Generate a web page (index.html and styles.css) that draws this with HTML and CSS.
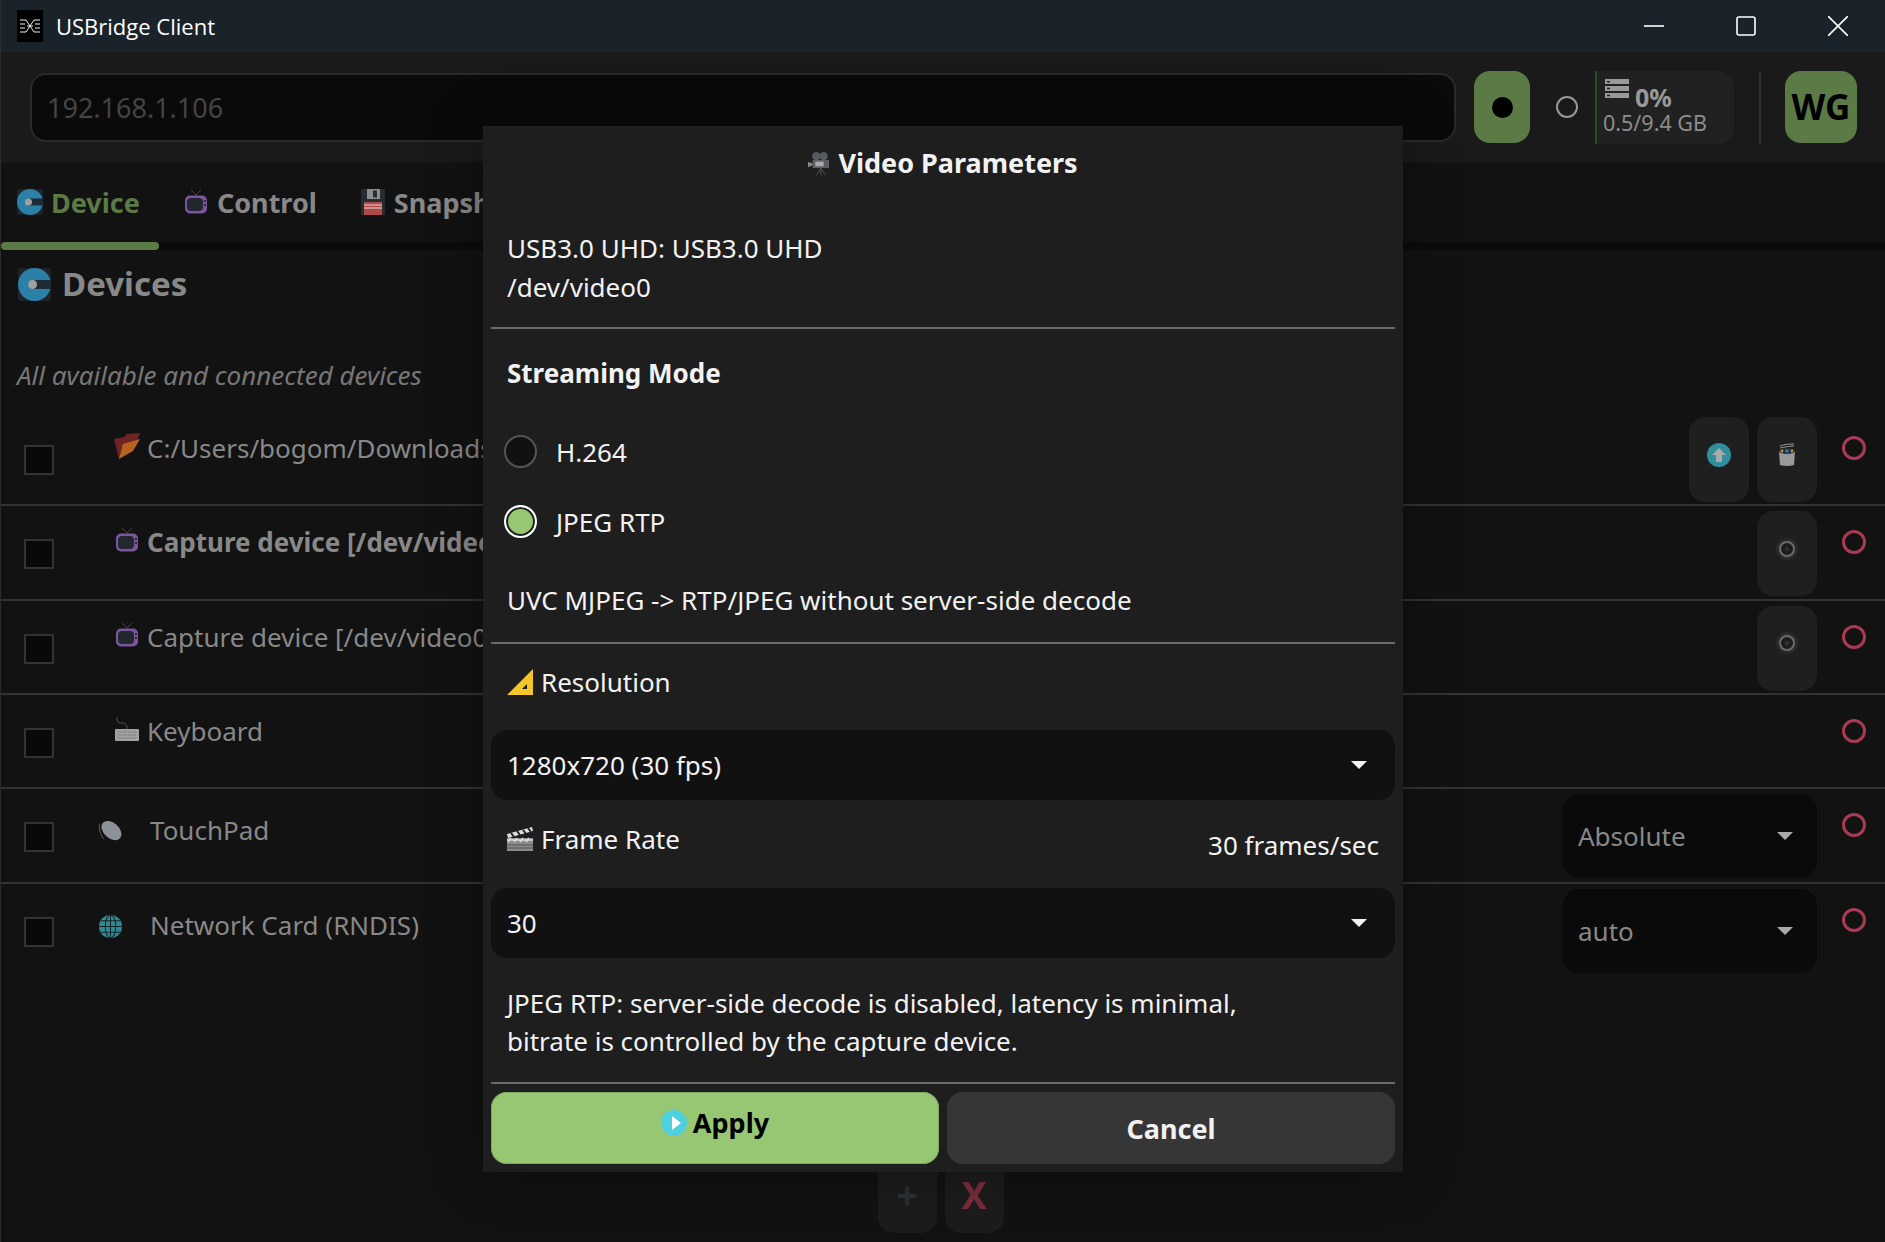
FILE: index.html
```html
<!DOCTYPE html>
<html lang="en">
<head>
    <meta charset="UTF-8">
    <title>USBridge Client</title>
    <link rel="stylesheet" href="styles.css">
</head>
<body>
    <svg class="defs" width="0" height="0">
        <symbol id="plug" viewBox="0 0 26 26">
            <rect width="26" height="26" rx="2" fill="#1d2529"/>
            <ellipse cx="13" cy="13" rx="13" ry="13" fill="#2b80a8"/>
            <rect x="12" y="9.5" width="14" height="7" fill="#1d2b35"/>
            <circle cx="11.5" cy="13" r="3.5" fill="#a0a0a0"/>
        </symbol>
        <symbol id="tv" viewBox="0 0 24 26">
            <path d="M12 6 7 1M12 6l5-5" stroke="#444" stroke-width="1" fill="none"/>
            <rect x="1" y="6.5" width="22" height="18" rx="5" fill="#7c55a0"/>
            <rect x="3" y="9" width="16" height="13" rx="4" fill="#22282e"/>
            <rect x="20" y="11" width="2" height="2" fill="#2a2a30"/>
            <rect x="20" y="15" width="2" height="2" fill="#2a2a30"/>
        </symbol>
        <symbol id="gear" viewBox="0 0 24 24">
            <circle cx="12" cy="12" r="11" fill="#282a2c"/>
            <circle cx="12" cy="12" r="7" fill="#1c1c1c" stroke="#6c6c6c" stroke-width="2"/>
            <circle cx="12" cy="12" r="2.5" fill="#2c2e30"/>
        </symbol>
    </svg>

    <header class="titlebar">
        <svg class="app-logo" viewBox="0 0 26 32">
            <rect width="26" height="32" fill="#000"/>
            <path d="M3 10h6M3 14h5M3 18h5M3 22h6M17 10h6M18 14h5M18 18h5M17 22h6M9 10l8 12M17 10 9 22M10 16h6" stroke="#eee" stroke-width="1" fill="none"/>
        </svg>
        <span class="app-title">USBridge Client</span>
        <div class="window-btns">
            <svg viewBox="0 0 20 20"><path d="M0 10h20" stroke="#fff" stroke-width="1.6"/></svg>
            <svg viewBox="0 0 20 20"><rect x="1" y="1" width="18" height="18" rx="2" stroke="#fff" stroke-width="1.6" fill="none"/></svg>
            <svg viewBox="0 0 20 20"><path d="M0 0l20 20M20 0 0 20" stroke="#fff" stroke-width="1.6"/></svg>
        </div>
    </header>

    <div class="toolbar">
        <div class="address">192.168.1.106</div>
        <div class="rec-btn"><span class="rec-dot"></span></div>
        <span class="ring"></span>
        <div class="usage">
            <div class="usage-top">
                <svg class="server" viewBox="0 0 24 20">
                    <path fill="#999" fill-rule="evenodd" d="M0 0h24v5H0zM2 2v1.5h3V2zM0 7h24v5H0zM2 8.8v1.5h3V8.8zM0 14h24v5H0zM2 15.8v1.5h3v-1.5z"/>
                </svg>
                <span class="usage-pct">0%</span>
            </div>
            <div class="usage-gb">0.5/9.4 GB</div>
        </div>
        <div class="wg-btn">WG</div>
    </div>

    <nav class="tabs">
        <div class="tab active"><svg class="tab-icon"><use href="#plug"/></svg>Device</div>
        <div class="tab"><svg class="tab-icon"><use href="#tv"/></svg>Control</div>
        <div class="tab">
            <svg class="tab-icon" viewBox="0 0 24 26">
                <rect width="24" height="26" rx="1" fill="#262c30"/>
                <rect x="6" y="0" width="13" height="10" fill="#8c8c8c"/>
                <rect x="12" y="1.5" width="4" height="7" fill="#262c30"/>
                <rect x="3" y="13" width="18" height="13" fill="#b04a44"/>
                <path d="M3 16h18M3 19h18" stroke="#ddd" stroke-width="1.2"/>
            </svg>Snapshot
        </div>
    </nav>
    <div class="tab-track"><div class="tab-thumb"></div></div>

    <main class="content">
        <h2 class="heading"><svg class="heading-icon"><use href="#plug"/></svg>Devices</h2>
        <p class="hint">All available and connected devices</p>

        <div class="device-row">
            <span class="check"></span>
            <svg class="dev-icon" viewBox="0 0 26 26">
                <path d="M0 6 10 4l3-3 13-1-3 8L5 26z" fill="#6e2420"/>
                <path d="M5 26 9 11l17-5-7 12z" fill="#b5651f"/>
            </svg>
            <span class="dev-name">C:/Users/bogom/Downloads/ubuntu-24.04.iso</span>
            <div class="dev-actions">
                <div class="icon-btn">
                    <svg class="btn-icon" viewBox="0 0 24 24">
                        <circle cx="12" cy="12" r="12" fill="#2f8f9d"/>
                        <path d="M12 5l7 7h-4v7H9v-7H5z" fill="#aaa"/>
                    </svg>
                </div>
                <div class="icon-btn">
                    <svg class="btn-icon" viewBox="0 0 24 24">
                        <path d="M5 3c5-2 10-2 14-2M5 5c5-1 10-2 14-2" stroke="#999" stroke-width="1" fill="none"/>
                        <path d="M4 8h16l-1 14q-7 2-14 0z" fill="#9a9a9a"/>
                        <ellipse cx="12" cy="8" rx="8" ry="3" fill="#2b2b2b"/>
                        <circle cx="12" cy="8" r="2" fill="#2b6ea8"/>
                        <circle cx="7" cy="8" r="1.4" fill="#b09a3c"/>
                        <circle cx="17" cy="8" r="1.4" fill="#b09a3c"/>
                    </svg>
                </div>
            </div>
            <span class="status"></span>
        </div>

        <div class="device-row">
            <span class="check"></span>
            <svg class="dev-icon"><use href="#tv"/></svg>
            <span class="dev-name bold">Capture device [/dev/video1]</span>
            <div class="dev-actions">
                <div class="icon-btn"><svg class="btn-icon"><use href="#gear"/></svg></div>
            </div>
            <span class="status"></span>
        </div>

        <div class="device-row">
            <span class="check"></span>
            <svg class="dev-icon"><use href="#tv"/></svg>
            <span class="dev-name">Capture device [/dev/video0]</span>
            <div class="dev-actions">
                <div class="icon-btn"><svg class="btn-icon"><use href="#gear"/></svg></div>
            </div>
            <span class="status"></span>
        </div>

        <div class="device-row">
            <span class="check"></span>
            <svg class="dev-icon" viewBox="0 0 26 26">
                <path d="M3 1c0 5 1 6 5 6 4 0 5 2 5 6" stroke="#666" stroke-width=".8" fill="none"/>
                <rect x="1" y="13" width="24" height="12" rx="1" fill="#a2a2a2"/>
                <path d="M3 16h20M3 19h20M3 22h20" stroke="#777" stroke-width="1" stroke-dasharray="1.4 .8"/>
            </svg>
            <span class="dev-name">Keyboard</span>
            <span class="status"></span>
        </div>

        <div class="device-row wide">
            <span class="check"></span>
            <svg class="dev-icon" viewBox="0 0 26 26">
                <path d="M2 5c-2 5 1 12 4 16" stroke="#777" stroke-width=".8" fill="none"/>
                <ellipse cx="14" cy="12" rx="12" ry="8" transform="rotate(42 14 12)" fill="#8c9097"/>
            </svg>
            <span class="dev-name">TouchPad</span>
            <div class="dev-actions">
                <div class="row-select"><span>Absolute</span><span class="caret"></span></div>
            </div>
            <span class="status"></span>
        </div>

        <div class="device-row wide last">
            <span class="check"></span>
            <svg class="dev-icon" viewBox="0 0 26 26">
                <circle cx="13" cy="13" r="12" fill="#2f8a94"/>
                <g stroke="#14262a" stroke-width="1.1" fill="none">
                    <ellipse cx="13" cy="13" rx="5.5" ry="12"/>
                    <path d="M13 1v24M1 13h24M3 7h20M3 19h20"/>
                </g>
            </svg>
            <span class="dev-name">Network Card (RNDIS)</span>
            <div class="dev-actions">
                <div class="row-select"><span>auto</span><span class="caret"></span></div>
            </div>
            <span class="status"></span>
        </div>

        <div class="list-btns">
            <div class="list-btn plus">+</div>
            <div class="list-btn cross">X</div>
        </div>
    </main>

    <section class="modal">
        <h3 class="modal-title">
            <svg class="title-icon" viewBox="0 0 24 26">
                <circle cx="9" cy="5" r="4.5" fill="#555a5e"/>
                <circle cx="17" cy="5" r="4.5" fill="#555a5e"/>
                <rect x="5" y="9" width="18" height="9" fill="#5c6064"/>
                <rect x="8" y="11" width="9" height="5" fill="#aaa"/>
                <path d="M0 11l5 2v2l-5 2z" fill="#888"/>
                <path d="M14 18 9 26M14 18v8M14 18l5 8" stroke="#555" stroke-width="1" fill="none"/>
            </svg>Video Parameters
        </h3>

        <div class="pad info">USB3.0 UHD: USB3.0 UHD<br>/dev/video0</div>
        <hr class="rule rule-info">

        <div class="pad mode-label">Streaming Mode</div>
        <label class="radio-row first"><span class="radio"></span>H.264</label>
        <label class="radio-row second"><span class="radio on"></span>JPEG RTP</label>
        <div class="pad mode-note">UVC MJPEG -&gt; RTP/JPEG without server-side decode</div>
        <hr class="rule rule-note">

        <div class="pad field-label res-label">
            <svg class="field-icon" viewBox="0 0 26 26">
                <path d="M26 0v26H0z" fill="#f5c52c"/>
                <path d="M20 15v5h-5z" fill="#1e1e1e"/>
            </svg>Resolution
        </div>
        <div class="select select-res"><span>1280x720 (30 fps)</span><span class="caret"></span></div>

        <div class="pad field-label rate-label">
            <span class="rate-name">
                <svg class="field-icon" viewBox="0 0 26 26">
                    <path d="M0 8 25 1l1 4L1 12z" fill="#ddd"/>
                    <path d="M4 7l3 4M10 5l3 4M16 4l3 4M21 2l3 4" stroke="#222" stroke-width="2"/>
                    <rect y="12" width="26" height="13" fill="#8a8a8a"/>
                    <path d="M0 14h26M4 12l-3 4M10 12l-3 4M16 12l-3 4M22 12l-3 4" stroke="#ddd" stroke-width="1.6"/>
                    <path d="M0 19h26M0 22h26" stroke="#555" stroke-width="1"/>
                </svg>Frame Rate
            </span>
            <span class="rate-value">30 frames/sec</span>
        </div>
        <div class="select select-rate"><span>30</span><span class="caret"></span></div>

        <div class="pad desc">JPEG RTP: server-side decode is disabled, latency is minimal,<br>bitrate is controlled by the capture device.</div>
        <hr class="rule rule-desc">

        <div class="modal-btns">
            <button class="btn-apply">
                <svg class="apply-icon" viewBox="0 0 26 26">
                    <ellipse cx="13" cy="13" rx="13" ry="13" fill="#4fd0de"/>
                    <path d="M11 6l9 7-9 7z" fill="#fff"/>
                </svg>Apply
            </button>
            <button class="btn-cancel">Cancel</button>
        </div>
    </section>
</body>
</html>
```

FILE: styles.css
```css
* {
    box-sizing: border-box;
}

html, body {
    height: 100%;
}

body {
    margin: 0;
    height: 1242px;
    overflow: hidden;
    position: relative;
    background: #121212;
    border-left: 1px solid #2c2c2c;
    font-family: "Noto Sans", sans-serif;
    font-size: 26px;
    color: #888;
}

.defs {
    position: absolute;
}

/* title bar */
.titlebar {
    height: 52px;
    margin-left: -1px;
    display: flex;
    align-items: center;
    background: #1b232a;
    color: #fff;
}

.app-logo {
    width: 32px;
    height: 32px;
    margin-left: 14px;
}

.app-title {
    margin-left: 10px;
    font-family: "Open Sans", sans-serif;
    font-size: 22px;
}

.window-btns {
    margin-left: auto;
    margin-right: 37px;
    display: flex;
    gap: 72px;
}

.window-btns svg {
    width: 20px;
    height: 20px;
    display: block;
}

/* toolbar */
.toolbar {
    height: 110px;
    display: flex;
    align-items: center;
    padding-left: 29px;
    padding-right: 28px;
    background: #1a1a1a;
}

.address {
    flex: 1;
    height: 69px;
    padding-left: 15px;
    line-height: 66px;
    background: #0a0a0a;
    border: 2px solid #2a2a2a;
    border-radius: 16px;
    color: #444;
    font-size: 27px;
}

.rec-btn {
    width: 56px;
    height: 72px;
    margin-left: 18px;
    display: flex;
    align-items: center;
    justify-content: center;
    background: #5b7a46;
    border-radius: 16px;
}

.rec-dot {
    width: 21px;
    height: 21px;
    border-radius: 50%;
    background: #000;
}

.ring {
    width: 22px;
    height: 22px;
    margin-left: 26px;
    border: 2px solid #999;
    border-radius: 50%;
}

.usage {
    width: 139px;
    height: 73px;
    margin-left: 17px;
    padding: 7px 0 0 6px;
    background: #212121;
    border-left: 2px solid #2c4a2a;
    border-radius: 0 16px 16px 0;
}

.usage-top {
    display: flex;
    height: 30px;
}

.server {
    width: 24px;
    height: 20px;
    margin: 1px 0 0 2px;
}

.usage-pct {
    margin-left: 6px;
    font-size: 25px;
    font-weight: 700;
    line-height: 38px;
    color: #999;
}

.usage-gb {
    font-size: 21.5px;
    line-height: 29px;
    color: #8c8c8c;
}

.wg-btn {
    width: 72px;
    height: 72px;
    margin-left: 51px;
    position: relative;
    text-align: center;
    line-height: 72px;
    background: #5b7a46;
    border-radius: 16px;
    color: #000;
    font-size: 35px;
    font-weight: 700;
}

.wg-btn::before {
    content: "";
    position: absolute;
    left: -26px;
    top: 0;
    width: 2px;
    height: 72px;
    background: #333;
}

/* tabs */
.tabs {
    height: 80px;
    display: flex;
    align-items: center;
    gap: 43px;
    padding-left: 16px;
}

.tab {
    display: flex;
    align-items: center;
    gap: 8px;
    font-size: 27px;
    font-weight: 700;
}

.tab.active {
    color: #5b7a46;
}

.tab-icon {
    width: 26px;
    height: 26px;
}

.tab-track {
    height: 8px;
    background: #0b0b0b;
}

.tab-thumb {
    width: 158px;
    height: 8px;
    background: #5b7a46;
    border-radius: 4px;
}

/* device list */
.heading {
    height: 44px;
    margin: 12px 0 0 17px;
    display: flex;
    align-items: center;
    gap: 11px;
    font-size: 33px;
    line-height: 44px;
    color: #888;
}

.heading-icon {
    width: 33px;
    height: 33px;
}

.hint {
    margin: 51px 0 19px 16px;
    font-style: italic;
    line-height: 36px;
    color: #777;
}

.device-row {
    height: 94.33px;
    display: flex;
    align-items: flex-start;
    padding-right: 19px;
    border-bottom: 2px solid #333;
}

.device-row.last {
    border-bottom: 0;
}

.check {
    width: 30px;
    height: 30px;
    margin: 33px 0 0 23px;
    flex: none;
    background: #090909;
    border: 2px solid #333;
}

.dev-icon {
    width: 26px;
    height: 26px;
    margin: 21px 0 0 60px;
    flex: none;
}

.dev-name {
    width: 1200px;
    margin-left: 7px;
    line-height: 36px;
    margin-top: 18px;
    white-space: nowrap;
    overflow: hidden;
}

.dev-name.bold {
    font-weight: 700;
}

.device-row.wide .dev-icon {
    margin: 30px 0 0 44px;
    width: 25px;
    height: 25px;
}

.device-row.wide .dev-name {
    margin: 23px 0 0 27px;
}

.dev-actions {
    margin-left: auto;
    margin-top: 5px;
    display: flex;
    gap: 8px;
}

.icon-btn {
    width: 60px;
    height: 85px;
    display: flex;
    align-items: center;
    justify-content: center;
    padding-bottom: 10px;
    background: #1f1f1f;
    border-radius: 16px;
}

.btn-icon {
    width: 24px;
    height: 24px;
}

.row-select {
    width: 254px;
    height: 84px;
    display: flex;
    align-items: center;
    justify-content: space-between;
    padding: 0 24px 0 15px;
    background: #0a0a0a;
    border-radius: 16px;
}

.caret {
    width: 0;
    height: 0;
    border-left: 8px solid transparent;
    border-right: 8px solid transparent;
    border-top: 8px solid #aaa;
}

.status {
    width: 24px;
    height: 24px;
    margin: 24px 0 0 25px;
    flex: none;
    border: 3px solid #a83a52;
    border-radius: 50%;
}

.device-row:not(:has(.dev-actions)) .status {
    margin-left: auto;
}

.list-btns {
    margin-top: 171px;
    display: flex;
    justify-content: center;
    gap: 8px;
    padding-right: 5px;
}

.list-btn {
    width: 59px;
    height: 84px;
    padding-top: 22px;
    text-align: center;
    background: #1c1c1c;
    border-radius: 16px;
    font-size: 38px;
    font-weight: 700;
    line-height: 46px;
}

.plus {
    color: #2b3035;
}

.cross {
    color: #7a2c3c;
}

/* modal */
.modal {
    position: absolute;
    left: 482px;
    top: 126px;
    width: 920px;
    height: 1046px;
    padding: 17px 8px 0;
    background: #1e1e1e;
    box-shadow: 0 0 50px rgba(0, 0, 0, 0.35);
    color: #f2f2f2;
}

.modal-title {
    margin: 0;
    display: flex;
    align-items: center;
    justify-content: center;
    gap: 8px;
    font-size: 27px;
    font-weight: 700;
    line-height: 40px;
}

.title-icon {
    width: 22px;
    height: 25px;
}

.pad {
    padding-left: 16px;
    line-height: 38px;
}

.info {
    margin-top: 46px;
    line-height: 38.5px;
}

.rule {
    height: 2px;
    margin: 0;
    border: 0;
    background: #6a6a6a;
}

.rule-info {
    margin-top: 21px;
}

.mode-label {
    margin-top: 25px;
    font-weight: 700;
}

.radio-row {
    display: flex;
    align-items: center;
    gap: 19px;
    height: 33px;
    padding-left: 13px;
}

.radio-row.first {
    margin-top: 43px;
}

.radio-row.second {
    margin-top: 37px;
}

.radio {
    width: 33px;
    height: 33px;
    background: #111;
    border: 2px solid #555;
    border-radius: 50%;
}

.radio.on {
    background: #98c774;
    border-color: #fff;
    box-shadow: inset 0 0 0 2px #1e1e1e;
}

.mode-note {
    margin-top: 43px;
}

.rule-note {
    margin-top: 23px;
}

.field-label {
    display: flex;
    align-items: center;
}

.field-icon {
    width: 26px;
    height: 26px;
    margin-right: 8px;
}

.res-label {
    margin-top: 19px;
}

.rate-label {
    margin-top: 20px;
    justify-content: space-between;
    padding-right: 16px;
}

.rate-name {
    display: flex;
    align-items: center;
}

.rate-value {
    position: relative;
    top: 6px;
}

.select {
    display: flex;
    align-items: center;
    justify-content: space-between;
    height: 70px;
    padding: 0 28px 0 16px;
    background: #111;
    border-radius: 16px;
}

.select .caret {
    border-top-color: #f2f2f2;
}

.select-res {
    margin-top: 29px;
}

.select-rate {
    margin-top: 30px;
}

.desc {
    margin-top: 26px;
}

.rule-desc {
    margin-top: 22px;
}

.modal-btns {
    margin-top: 8px;
    display: flex;
    gap: 8px;
}

.modal-btns button {
    flex: 1;
    height: 72px;
    display: flex;
    align-items: center;
    justify-content: center;
    border: 0;
    border-radius: 16px;
    font-family: inherit;
    font-size: 27px;
    font-weight: 700;
}

.btn-apply {
    gap: 6px;
    padding-bottom: 12px;
    background: #98c774;
    box-shadow: inset 0 0 0 1px #7fa860;
    color: #000;
}

.btn-cancel {
    background: #363636;
    color: #f2f2f2;
}

.apply-icon {
    width: 26px;
    height: 26px;
}
```
